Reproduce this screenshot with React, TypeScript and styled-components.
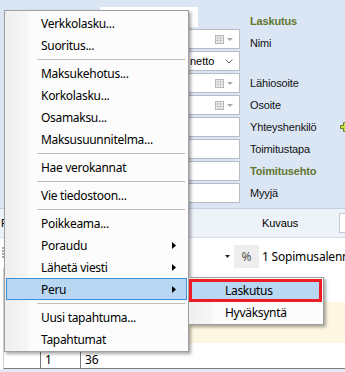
import React from 'react';
import styled, { createGlobalStyle } from 'styled-components';

const Global = createGlobalStyle`
  html, body { margin: 0; padding: 0; }
  body { width: 345px; height: 372px; overflow: hidden; background: #fff; }
`;

const Screen = styled.div`
  position: relative;
  width: 345px;
  height: 372px;
  overflow: hidden;
  display: flex;
  flex-direction: column;
  background: #fff;
  font-family: "Liberation Sans", Arial, sans-serif;
  font-size: 11px;
  color: #000;
`;

const FormArea = styled.div`
  height: 209px;
  flex: none;
  box-sizing: border-box;
  background: #dbe6f5;
  padding-top: 7px;
  border-bottom: 1px solid #c5d1e2;
  display: flex;
`;

const InputsCol = styled.div`
  margin-left: 100px;
  width: 140px;
  flex: none;
  display: flex;
  flex-direction: column;
  gap: 2px;
`;

const LabelsCol = styled.div`
  margin-left: 10px;
  flex: 1;
  display: flex;
  flex-direction: column;
  gap: 2px;
`;

const TopBox = styled.div`
  width: 98px;
  height: 20px;
  background: #fff;
`;

const Field = styled.div`
  height: 20px;
  box-sizing: border-box;
  background: #fff;
  border: 1px solid #b8bcc4;
  display: flex;
  align-items: center;
  padding: 0 6px 0 4px;
  gap: 4px;
`;

const FieldText = styled.span`
  flex: 1;
  white-space: nowrap;
  overflow: hidden;
`;

const Label = styled.div<{ $bold?: boolean; $bottom?: boolean }>`
  height: 20px;
  display: flex;
  align-items: ${(p) => (p.$bottom ? 'flex-end' : 'center')};
  white-space: nowrap;
  letter-spacing: -0.15px;
  font-weight: ${(p) => (p.$bold ? 700 : 400)};
  color: ${(p) => (p.$bold ? '#637630' : '#111')};
`;

const PlusSlot = styled.span`
  margin-left: 23px;
  display: flex;
`;

const Strip = styled.div`
  height: 29px;
  flex: none;
  box-sizing: border-box;
  background: #eef3fa;
  border-bottom: 1px solid #d5dde8;
  display: flex;
  align-items: center;
  padding-left: 1px;
`;

const StripLetter = styled.span`
  width: 261px;
  flex: none;
`;

const StripTitle = styled.span`
  width: 77px;
  flex: none;
  letter-spacing: -0.1px;
`;

const StripBox = styled.div`
  width: 10px;
  height: 18px;
  flex: none;
  background: #fff;
  border: 1px solid #c4c9d1;
  border-right: none;
`;

const DiscountRow = styled.div`
  height: 30px;
  flex: none;
  box-sizing: border-box;
  padding-top: 7px;
  display: flex;
  align-items: stretch;
  overflow: hidden;
`;

const Grip = styled.div`
  width: 225px;
  flex: none;
  padding: 2px 0 0 2px;
  box-sizing: border-box;
`;

const DropCaret = styled.div`
  width: 9px;
  flex: none;
  display: flex;
  align-items: center;
`;

const PercentBtn = styled.div`
  width: 25px;
  flex: none;
  background: #eeeeee;
  color: #555;
  display: flex;
  align-items: center;
  justify-content: center;
  font-family: "Noto Sans", "Liberation Sans", sans-serif;
  font-size: 12px;
`;

const DiscountText = styled.div`
  padding-left: 3px;
  flex: none;
  display: flex;
  align-items: center;
  white-space: nowrap;
  font-family: "Noto Sans", "Liberation Sans", sans-serif;
  font-size: 12px;
  letter-spacing: -0.2px;
`;

const WhiteGap = styled.div<{ $h: number }>`
  height: ${(p) => p.$h}px;
  flex: none;
  border-left: 1px solid #cfcfcf;
  margin-left: 3px;
`;

const CreamRow = styled.div`
  height: 41px;
  flex: none;
  background: #fdf6e2;
  margin-left: 3px;
  border-left: 1px solid #cfcfcf;
`;

const GridRow = styled.div`
  height: 18px;
  flex: none;
  display: flex;
  margin-left: 3px;
  border-left: 1px solid #cfcfcf;
  border-bottom: 1px solid #7c7c7c;
`;

const Cell = styled.div<{ $w?: number }>`
  width: ${(p) => (p.$w ? `${p.$w}px` : 'auto')};
  flex: ${(p) => (p.$w ? 'none' : 1)};
  box-sizing: border-box;
  border-right: ${(p) => (p.$w ? '1px solid #7c7c7c' : 'none')};
  padding-left: 4px;
  display: flex;
  align-items: center;
  font-family: "Noto Sans", "Liberation Sans", sans-serif;
  font-size: 12px;
`;

const Footer = styled.div`
  flex: 1;
  background: #e4e7f5;
`;

/* ---------- Menus ---------- */

const Menu = styled.div`
  position: absolute;
  left: 4px;
  top: 10px;
  width: 185px;
  box-sizing: border-box;
  border: 1px solid #a0a0a0;
  padding: 1px;
  background: linear-gradient(to right, #eeeeee 0px, #f6f6f6 22px, #fbfbfb 24px, #fcfcfc 24px);
  box-shadow: 2px 2px 3px rgba(0, 0, 0, 0.35);
  font-family: "Segoe UI", "Noto Sans", sans-serif;
  font-size: 12px;
  letter-spacing: -0.3px;
  color: #000;
`;

const SubMenu = styled(Menu)`
  left: 188px;
  top: 277px;
  width: 136px;
`;

const Item = styled.div<{ $active?: boolean }>`
  position: relative;
  height: 22px;
  box-sizing: border-box;
  display: flex;
  align-items: center;
  padding: 0 10px 0 34px;
  border: 1px solid ${(p) => (p.$active ? '#3d8fd8' : 'transparent')};
  background: ${(p) => (p.$active ? '#b7d7f3' : 'transparent')};
  white-space: nowrap;
`;

const ItemText = styled.span`
  flex: 1;
`;

const Separator = styled.div`
  height: 6px;
  display: flex;
  align-items: center;
  margin: 0 2px 0 31px;
  &::after {
    content: '';
    flex: 1;
    height: 1px;
    background: #bdbdbd;
  }
`;

const Annotation = styled.span`
  position: absolute;
  left: -2px;
  top: -1px;
  right: -1px;
  bottom: -2px;
  border: 3px solid #ee1c25;
  pointer-events: none;
`;

const Arrow = () => (
  <svg width="4" height="7" viewBox="0 0 4 7">
    <polygon points="0,0 4,3.5 0,7" fill="#000" />
  </svg>
);

const CalendarIcon = () => (
  <svg width="18" height="9" viewBox="0 0 18 9">
    <rect x="0.5" y="0.5" width="8" height="8" fill="#f4f4f4" stroke="#b5b5b5" />
    <line x1="0.5" y1="3" x2="8.5" y2="3" stroke="#c8c8c8" />
    <line x1="0.5" y1="5.5" x2="8.5" y2="5.5" stroke="#c8c8c8" />
    <line x1="3" y1="0.5" x2="3" y2="8.5" stroke="#c8c8c8" />
    <line x1="5.5" y1="0.5" x2="5.5" y2="8.5" stroke="#c8c8c8" />
    <polygon points="12,3 18,3 15,6" fill="#a8a8a8" />
  </svg>
);

const Chevron = () => (
  <svg width="8" height="5" viewBox="0 0 8 5">
    <polyline points="0.5,0.5 4,4 7.5,0.5" fill="none" stroke="#6a6a6a" strokeWidth="1" />
  </svg>
);

const PlusIcon = () => (
  <svg width="10" height="10" viewBox="0 0 10 10">
    <path
      d="M3.5 0.5 H6.5 V3.5 H9.5 V6.5 H6.5 V9.5 H3.5 V6.5 H0.5 V3.5 H3.5 Z"
      fill="#c6e03c"
      stroke="#6f7d22"
      strokeWidth="1"
    />
  </svg>
);

const GripDots = () => (
  <svg width="3" height="12" viewBox="0 0 3 12">
    {[0, 3, 6, 9].map((y) => (
      <rect key={y} x="0" y={y} width="2" height="2" fill="#a9a9a9" />
    ))}
  </svg>
);

type Entry = { label?: string; sub?: boolean; active?: boolean; sep?: boolean };

const entries: Entry[] = [
  { label: 'Verkkolasku...' },
  { label: 'Suoritus...' },
  { sep: true },
  { label: 'Maksukehotus...' },
  { label: 'Korkolasku...' },
  { label: 'Osamaksu...' },
  { label: 'Maksusuunnitelma...' },
  { sep: true },
  { label: 'Hae verokannat' },
  { sep: true },
  { label: 'Vie tiedostoon...' },
  { sep: true },
  { label: 'Poikkeama...' },
  { label: 'Poraudu', sub: true },
  { label: 'Lähetä viesti', sub: true },
  { label: 'Peru', sub: true, active: true },
  { sep: true },
  { label: 'Uusi tapahtuma...' },
  { label: 'Tapahtumat' },
];

export default function App() {
  return (
    <>
      <Global />
      <Screen>
        <FormArea>
          <InputsCol>
            <TopBox />
            <Field>
              <FieldText />
              <CalendarIcon />
            </Field>
            <Field>
              <FieldText>14 pv 2 %, 30 pv netto</FieldText>
              <Chevron />
            </Field>
            <Field>
              <FieldText />
              <CalendarIcon />
            </Field>
            <Field>
              <FieldText />
              <CalendarIcon />
            </Field>
            <Field />
            <Field />
            <Field />
            <Field />
          </InputsCol>
          <LabelsCol>
            <Label $bold $bottom>Laskutus</Label>
            <Label $bottom>Nimi</Label>
            <Label />
            <Label>Lähiosoite</Label>
            <Label>Osoite</Label>
            <Label>
              Yhteyshenkilö
              <PlusSlot>
                <PlusIcon />
              </PlusSlot>
            </Label>
            <Label>Toimitustapa</Label>
            <Label $bold>Toimitusehto</Label>
            <Label>Myyjä</Label>
          </LabelsCol>
        </FormArea>

        <Strip>
          <StripLetter>F</StripLetter>
          <StripTitle>Kuvaus</StripTitle>
          <StripBox />
        </Strip>

        <DiscountRow>
          <Grip>
            <GripDots />
          </Grip>
          <DropCaret>
            <svg width="5" height="3" viewBox="0 0 5 3">
              <polygon points="0,0 5,0 2.5,3" fill="#222" />
            </svg>
          </DropCaret>
          <PercentBtn>%</PercentBtn>
          <DiscountText>1 Sopimusalennus</DiscountText>
        </DiscountRow>

        <WhiteGap $h={34} />
        <CreamRow />
        <WhiteGap $h={7} />
        <GridRow>
          <Cell $w={37} />
          <Cell $w={40}>1</Cell>
          <Cell>36</Cell>
        </GridRow>
        <Footer />

        <Menu>
          {entries.map((e, i) =>
            e.sep ? (
              <Separator key={i} />
            ) : (
              <Item key={i} $active={e.active}>
                <ItemText>{e.label}</ItemText>
                {e.sub && <Arrow />}
              </Item>
            )
          )}
        </Menu>

        <SubMenu>
          <Item $active>
            <ItemText>Laskutus</ItemText>
            <Annotation />
          </Item>
          <Item>
            <ItemText>Hyväksyntä</ItemText>
          </Item>
        </SubMenu>
      </Screen>
    </>
  );
}
